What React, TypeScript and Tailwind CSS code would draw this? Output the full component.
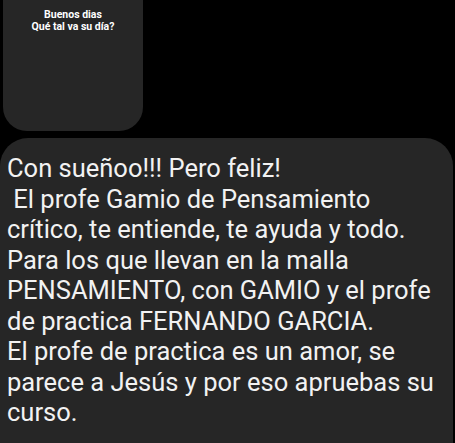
const lines = [
  'Con sueñoo!!! Pero feliz!',
  ' El profe Gamio de Pensamiento',
  'crítico, te entiende, te ayuda y todo.',
  'Para los que llevan en la malla',
  'PENSAMIENTO, con GAMIO y el profe',
  'de practica FERNANDO GARCIA.',
  'El profe de practica es un amor, se',
  'parece a Jesús y por eso apruebas su',
  'curso.',
];

export default function App() {
  return (
    <div className="w-[455px] h-[443px] overflow-hidden bg-black font-['Roboto',sans-serif]">
      <div className="ml-[3px] w-[140px] h-[131px] rounded-b-[24px] bg-[#262626] pt-[9px] text-center text-[10.5px] font-bold leading-[11.5px] text-white">
        <div>Buenos dias</div>
        <div>Qué tal va su día?</div>
      </div>
      <div className="mt-[7px] w-[453px] h-[320px] rounded-t-[28px] bg-[#262626] pl-[7px] pt-[15px] text-[25.5px] leading-[30.5px] text-[#f2f2f2]">
        {lines.map((l, i) => (
          <div key={i} className="whitespace-pre">{l}</div>
        ))}
      </div>
    </div>
  );
}
